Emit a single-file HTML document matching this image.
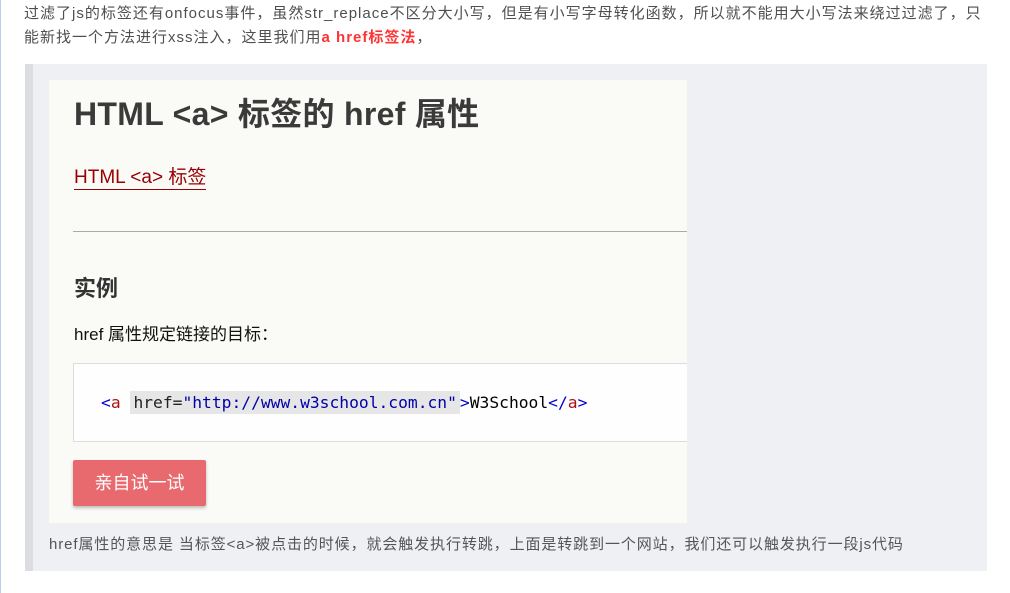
<!DOCTYPE html>
<html><head><meta charset="utf-8"><style>
body{margin:0;width:1010px;height:593px;background:#fff;position:relative;overflow:hidden;font-family:"Liberation Sans","Noto Sans CJK SC",sans-serif;}
.lb{position:absolute;left:0;top:0;width:1px;height:593px;background:#b8d0f0}
.p{position:absolute;left:24px;top:2px;width:968px;font-size:15px;line-height:24px;color:#4f4f4f;letter-spacing:1px}
.p b{color:#f33}
.bq{position:absolute;left:25px;top:64px;width:962px;height:507px;background:#eef0f4}
.bq .bar{position:absolute;left:0;top:0;width:8px;height:100%;background:#dcdde2}
.img{position:absolute;left:49px;top:80px;width:638px;height:443px;background:#fafaf7;overflow:hidden}
.h1{position:absolute;left:25px;top:9px;font-size:32px;font-weight:bold;color:#3a3a3a;white-space:nowrap;letter-spacing:0.3px}
.lk{position:absolute;left:25px;top:86px;font-size:19px;color:#900;border-bottom:1px solid #900;line-height:23px}
.hr{position:absolute;left:24px;top:151px;width:620px;height:1px;background:#aaa}
.h2{position:absolute;left:25px;top:191px;font-size:22px;font-weight:bold;color:#333}
.t{position:absolute;left:25px;top:240px;font-size:17px;color:#111}
.code{position:absolute;left:24px;top:283px;width:640px;height:79px;background:#fefefe;border:1px solid #ddd;box-sizing:border-box}
.cl{position:absolute;left:27px;top:28px;font-family:"DejaVu Sans Mono","Liberation Mono",monospace;font-size:16.3px;white-space:nowrap;line-height:22px}
.btn{position:absolute;left:24px;top:380px;width:133px;height:46px;background:#e96a6e;border-radius:2px;box-shadow:0 2px 3px rgba(0,0,0,.25);color:#fff;font-size:18px;text-align:center;line-height:46px}
.bt{position:absolute;left:49px;top:533px;font-size:15px;color:#555;white-space:nowrap;letter-spacing:0.9px}
</style></head><body>
<div class="lb"></div>
<div class="p">过滤了js的标签还有onfocus事件，虽然str_replace不区分大小写，但是有小写字母转化函数，所以就不能用大小写法来绕过过滤了，只能新找一个方法进行xss注入，这里我们用<b>a href标签法</b>，</div>
<div class="bq"><div class="bar"></div></div>
<div class="img">
<div class="h1">HTML &lt;a&gt; 标签的 href 属性</div>
<div class="lk">HTML &lt;a&gt; 标签</div>
<div class="hr"></div>
<div class="h2">实例</div>
<div class="t">href 属性规定链接的目标：</div>
<div class="code"><div class="cl"><span style="color:#00c">&lt;</span><span style="color:#a11">a</span> <span style="background:#e6e6e6;padding:2px 3px"><span style="color:#222">href=</span><span style="color:#00a">"http://www.w3school.com.cn"</span></span><span style="color:#00c">&gt;</span>W3School<span style="color:#00c">&lt;/</span><span style="color:#a11">a</span><span style="color:#00c">&gt;</span></div></div>
<div class="btn">亲自试一试</div>
</div>
<div class="bt">href属性的意思是 当标签&lt;a&gt;被点击的时候，就会触发执行转跳，上面是转跳到一个网站，我们还可以触发执行一段js代码</div>
</body></html>
